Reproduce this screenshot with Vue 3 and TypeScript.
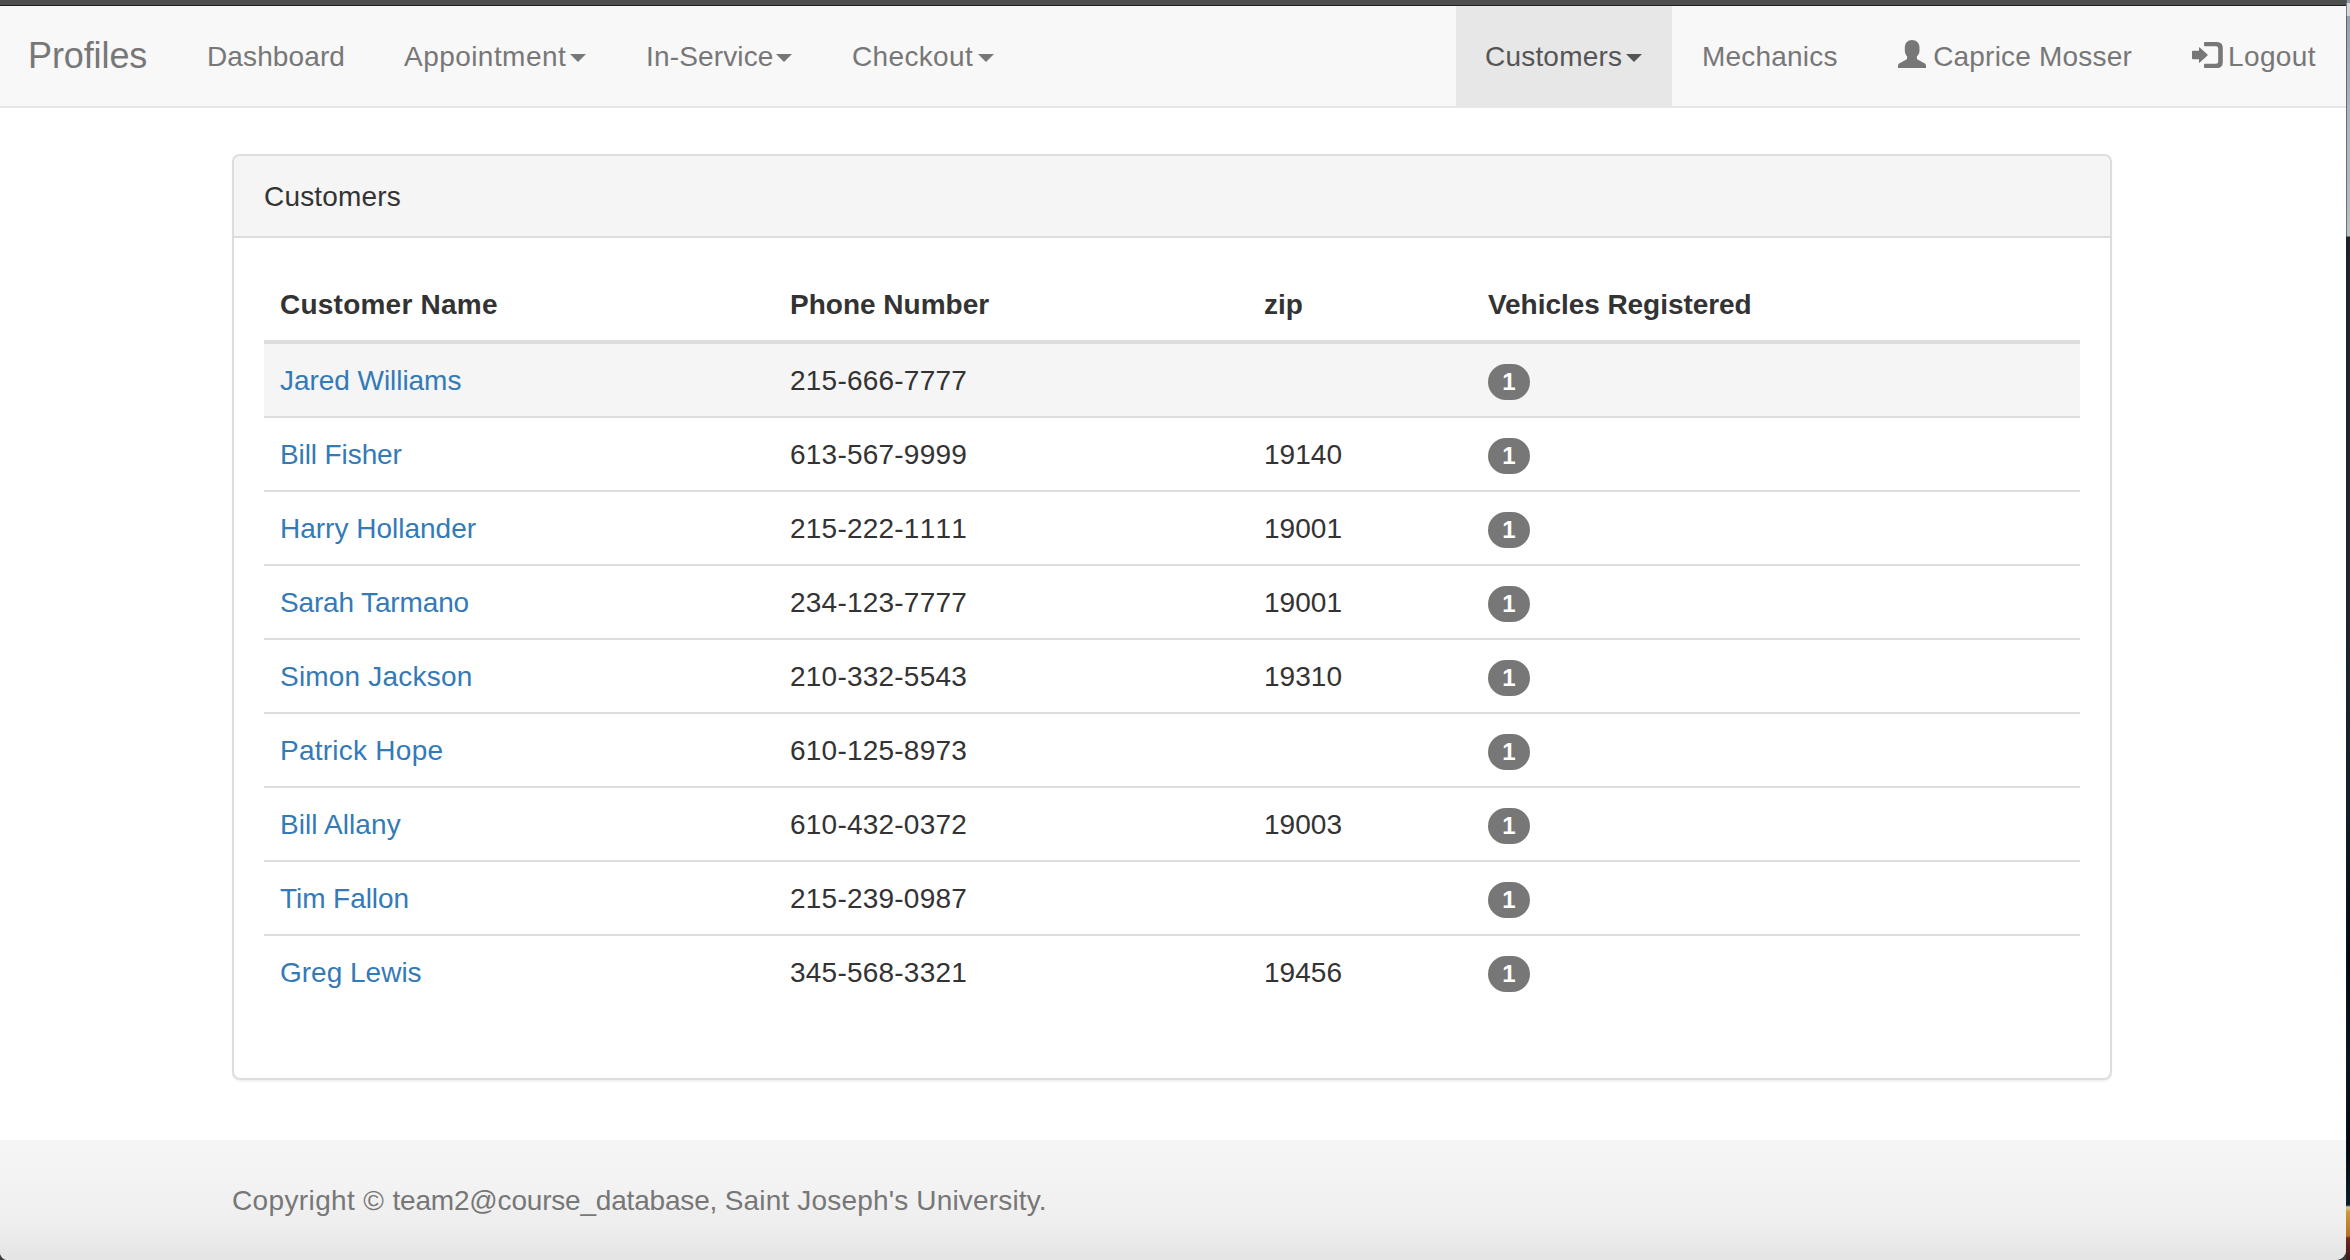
<script setup lang="ts">
interface NavItem {
  label: string
  key: string
  caret?: boolean
  active?: boolean
  icon?: 'user' | 'login'
}

interface Customer {
  name: string
  phone: string
  zip: string
  vehicles: number
  tracking: number
}

const leftNav: NavItem[] = [
  { label: 'Dashboard', key: 'dashboard' },
  { label: 'Appointment', key: 'appointment', caret: true },
  { label: 'In-Service', key: 'service', caret: true },
  { label: 'Checkout', key: 'checkout', caret: true },
]

const rightNav: NavItem[] = [
  { label: 'Customers', key: 'customers', caret: true, active: true },
  { label: 'Mechanics', key: 'mechanics' },
  { label: 'Caprice Mosser', key: 'account', icon: 'user' },
  { label: 'Logout', key: 'logout', icon: 'login' },
]

const customers: Customer[] = [
  { name: 'Jared Williams', phone: '215-666-7777', zip: '', vehicles: 1, tracking: -0.05 },
  { name: 'Bill Fisher', phone: '613-567-9999', zip: '19140', vehicles: 1, tracking: -0.1 },
  { name: 'Harry Hollander', phone: '215-222-1111', zip: '19001', vehicles: 1, tracking: 0 },
  { name: 'Sarah Tarmano', phone: '234-123-7777', zip: '19001', vehicles: 1, tracking: -0.15 },
  { name: 'Simon Jackson', phone: '210-332-5543', zip: '19310', vehicles: 1, tracking: 0.2 },
  { name: 'Patrick Hope', phone: '610-125-8973', zip: '', vehicles: 1, tracking: 0.25 },
  { name: 'Bill Allany', phone: '610-432-0372', zip: '19003', vehicles: 1, tracking: 0.08 },
  { name: 'Tim Fallon', phone: '215-239-0987', zip: '', vehicles: 1, tracking: -0.07 },
  { name: 'Greg Lewis', phone: '345-568-3321', zip: '19456', vehicles: 1, tracking: 0 },
]
</script>

<template>
  <div class="desktop">
    <div class="window">
      <div class="chrome"></div>
      <nav class="navbar">
        <a class="brand">Profiles</a>
        <ul class="nav">
          <li v-for="item in leftNav" :key="item.key" :class="['item', item.key]">
            <span class="label">{{ item.label }}</span>
            <i v-if="item.caret" class="caret"></i>
          </li>
        </ul>
        <ul class="nav right">
          <li
            v-for="item in rightNav"
            :key="item.key"
            :class="['item', item.key, { active: item.active }]"
          >
            <svg v-if="item.icon === 'user'" class="icon user" viewBox="0 0 28 28">
              <path
                d="M14 0C18.400 0 21.500 3 21.500 7.500V10.500C21.500 13 20.500 15 18.900 16.300V18C18.900 19 19.500 19.600 20.500 20.100L26 22.900C27.500 23.700 28 24.500 28 26V28H0V26C0 24.500.500 23.700 2 22.900L7.500 20.100C8.500 19.600 9.100 19 9.100 18V16.300C7.700 15 6.800 13 6.800 10.500V7.500C6.800 3 9.700 0 14 0Z"
              />
            </svg>
            <svg v-if="item.icon === 'login'" class="icon login" viewBox="0 0 31 26">
              <path
                d="M13 0H25Q30.800 0 30.800 6V20Q30.800 26 25 26H13Q12 26 12 25V22.800Q12 21.800 13 21.800H24Q26.200 21.800 26.200 19.600V6.400Q26.200 4.200 24 4.200H13Q12 4.200 12 3.200V1Q12 0 13 0Z"
              />
              <path
                d="M7.800 5.400L15.500 12.400Q16.100 13 15.500 13.600L7.800 20.600Q7 21.200 7 20.200V17.200H1Q0 17.200 0 16.200V9.800Q0 8.800 1 8.800H7V5.800Q7 4.800 7.800 5.400Z"
              />
            </svg>
            <span class="label">{{ item.label }}</span>
            <i v-if="item.caret" class="caret"></i>
          </li>
        </ul>
      </nav>

      <main class="container">
        <section class="panel">
          <header class="panel-heading">Customers</header>
          <div class="panel-body">
            <table>
              <colgroup>
                <col class="c-name" />
                <col class="c-phone" />
                <col class="c-zip" />
                <col class="c-vehicles" />
              </colgroup>
              <thead>
                <tr>
                  <th class="h-name">Customer Name</th>
                  <th>Phone Number</th>
                  <th>zip</th>
                  <th class="h-vehicles">Vehicles Registered</th>
                </tr>
              </thead>
              <tbody>
                <tr v-for="(c, i) in customers" :key="c.name" :class="{ hover: i === 0 }">
                  <td><a :style="{ letterSpacing: c.tracking + 'px' }">{{ c.name }}</a></td>
                  <td class="phone">{{ c.phone }}</td>
                  <td class="zip">{{ c.zip }}</td>
                  <td><span class="badge">{{ c.vehicles }}</span></td>
                </tr>
              </tbody>
            </table>
          </div>
        </section>
      </main>

      <footer class="footer">
        <p><span class="mark">Copyright © </span><span class="team">team2@course_database, </span><span class="school">Saint Joseph's University.</span></p>
      </footer>
    </div>
  </div>
</template>

<style>
body {
  margin: 0;
  overflow: hidden;
}
</style>

<style scoped>
.desktop {
  box-sizing: border-box;
  width: 2350px;
  height: 1260px;
  padding-right: 4px;
  font-family: 'Liberation Sans', Arial, sans-serif;
  font-size: 28px;
  line-height: 40px;
  color: #333;
  background:
    linear-gradient(90deg, rgba(20, 40, 55, 0.5) 0 1px, transparent 1px) right top / 4px 1206px no-repeat,
    linear-gradient(
      180deg,
      #8f969e 0, #8f969e 3px, #d5d7d9 3px, #d5d7d9 16px,
      #96a2af 16px, #aeb8c3 130px, #aebabf 180px, #b7c2c4 236px,
      #20222a 237px, #22252b 600px, #10202a 800px, #03080f 960px,
      #061724 1060px, #04080f 1150px, #04202c 1205px,
      #d9c9a0 1207px, #c99a32 1212px, #b5701f 1236px, #6b2a20 1238px, #3c1a16 1260px
    ) right top / 4px 1260px no-repeat,
    #3d3d3d;
}

.window {
  display: flex;
  flex-direction: column;
  height: 1260px;
  overflow: hidden;
  background: #fff;
  border-radius: 0 0 10px 8px;
}

.chrome {
  flex: none;
  height: 5px;
  background: #4f4f4f;
  border-bottom: 1px solid #231f23;
}

.navbar {
  display: flex;
  flex: none;
  height: 100px;
  background: #f8f8f8;
  border-bottom: 2px solid #e7e7e7;
  color: #777;
}

.brand {
  box-sizing: border-box;
  width: 177px;
  padding: 30px 0 30px 28px;
  font-size: 36px;
  letter-spacing: -0.1px;
  white-space: nowrap;
}

.nav {
  display: flex;
  margin: 0;
  padding: 0;
  list-style: none;
}

.nav.right {
  margin-left: auto;
}

.item {
  display: flex;
  box-sizing: border-box;
  align-items: flex-start;
  justify-content: space-between;
  height: 100px;
  padding: 30px;
  white-space: nowrap;
}

.item.active {
  color: #555;
  background: #e7e7e7;
}

.label {
  padding-top: 1px;
}

.dashboard { width: 197px; letter-spacing: 0.12px; }
.appointment { width: 242px; letter-spacing: 0.45px; }
.service { width: 206px; letter-spacing: 0.15px; }
.checkout { width: 202px; letter-spacing: 0.35px; }
.customers { width: 216px; padding-left: 29px; letter-spacing: 0.2px; }
.mechanics { width: 196px; letter-spacing: 0.2px; }
.account { width: 294px; letter-spacing: 0.2px; }
.logout { width: 184px; letter-spacing: 0.4px; }

.caret {
  flex: none;
  margin-top: 18px;
  border-top: 8px solid currentColor;
  border-right: 8px solid transparent;
  border-left: 8px solid transparent;
}

.icon {
  flex: none;
  fill: currentColor;
}

.icon.user {
  width: 28px;
  height: 28px;
  margin-top: 4px;
}

.icon.login {
  width: 31px;
  height: 26px;
  margin-top: 6px;
}

.container {
  width: 1880px;
  margin: 46px 0 0 232px;
}

.panel {
  box-sizing: border-box;
  height: 926px;
  background: #fff;
  border: 2px solid #ddd;
  border-radius: 8px;
  box-shadow: 0 2px 2px rgba(0, 0, 0, 0.05);
}

.panel-heading {
  padding: 21px 30px 19px;
  letter-spacing: 0.17px;
  background: #f5f5f5;
  border-bottom: 2px solid #ddd;
  border-radius: 6px 6px 0 0;
}

.panel-body {
  padding: 30px;
}

table {
  width: 1816px;
  table-layout: fixed;
  border-collapse: separate;
  border-spacing: 0;
}

.c-name { width: 510px; }
.c-phone { width: 474px; }
.c-zip { width: 224px; }
.c-vehicles { width: 608px; }

th,
td {
  height: 40px;
  padding: 17px 16px 15px;
  text-align: left;
  vertical-align: top;
}

th {
  font-weight: 700;
  border-bottom: 4px solid #ddd;
}

.h-name { letter-spacing: 0.23px; }
.h-vehicles { letter-spacing: -0.05px; }

tbody tr + tr td {
  border-top: 2px solid #ddd;
}

tr.hover td {
  background: #f5f5f5;
}

td a {
  color: #337ab7;
}

.phone,
.zip {
  font-kerning: none;
}

.phone { letter-spacing: 0.22px; }
.zip { letter-spacing: 0.05px; }

.badge {
  display: block;
  box-sizing: border-box;
  width: 42px;
  height: 36px;
  margin-top: 3px;
  font-size: 24px;
  font-weight: 700;
  line-height: 36px;
  text-align: center;
  color: #fff;
  background: #777;
  border-radius: 20px;
}

.footer {
  flex: none;
  box-sizing: border-box;
  height: 120px;
  margin-top: 60px;
  padding: 41px 0 0 232px;
  color: #777;
  background: linear-gradient(180deg, #f5f5f5 0, #f3f3f3 35%, #eee 72%, #e4e4e4 100%);
}

.footer p {
  margin: 0;
}

.mark { letter-spacing: 0.37px; }
.team { letter-spacing: -0.19px; }
.school { letter-spacing: 0.17px; }
</style>
